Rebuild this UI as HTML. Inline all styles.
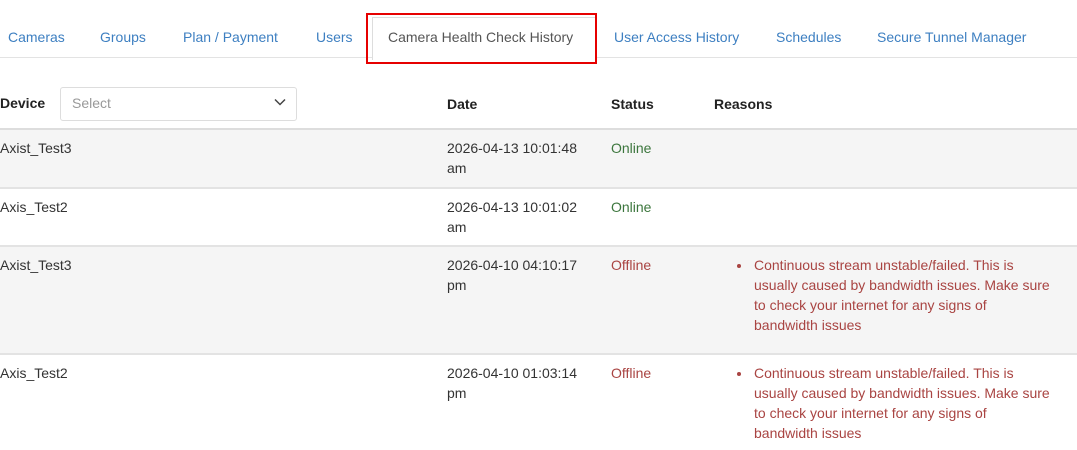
<!DOCTYPE html>
<html><head><style>
body{margin:0;width:1077px;height:450px;background:#fff;font-family:"Liberation Sans",sans-serif;font-size:14px;color:#333;position:relative;overflow:hidden}
.a{position:absolute;white-space:nowrap;line-height:20px}
.tab{color:#3d7fc1;top:27px}
.b{font-weight:bold;color:#222}
.row{position:absolute;left:0;width:1077px}
.on{color:#3c763d}.off{color:#a94442}
.rs{color:#a94442;position:absolute;left:754px;line-height:20px;width:300px;white-space:normal}
.dot{position:absolute;left:737px;width:4px;height:4px;border-radius:50%;background:#a94442}
</style></head><body>
<div style="position:absolute;left:0;top:57px;width:1077px;height:1px;background:#e3e3e3"></div>
<div style="position:absolute;left:372px;top:17px;width:222px;height:42px;background:#fff;border:1px solid #ddd;border-bottom:none"></div>
<div style="position:absolute;left:366px;top:13px;width:227px;height:47px;border:2.5px solid #e60000"></div>
<span class="a tab" style="left:8px">Cameras</span>
<span class="a tab" style="left:100px">Groups</span>
<span class="a tab" style="left:183px">Plan / Payment</span>
<span class="a tab" style="left:316px">Users</span>
<span class="a" style="left:388px;top:27px;color:#555">Camera Health Check History</span>
<span class="a tab" style="left:614px">User Access History</span>
<span class="a tab" style="left:776px">Schedules</span>
<span class="a tab" style="left:877px">Secure Tunnel Manager</span>

<span class="a b" style="left:0;top:93px">Device</span>
<div style="position:absolute;left:60px;top:87px;width:235px;height:32px;border:1px solid #ddd;border-radius:3px"></div>
<span class="a" style="left:72px;top:93px;color:#999">Select</span>
<svg style="position:absolute;left:274px;top:98px" width="12" height="8"><path d="M1 1.5L6 6.5L11 1.5" fill="none" stroke="#444" stroke-width="1.5"/></svg>
<span class="a b" style="left:447px;top:94px">Date</span>
<span class="a b" style="left:611px;top:94px">Status</span>
<span class="a b" style="left:714px;top:94px">Reasons</span>

<div class="row" style="top:128px;height:2px;background:#ddd"></div>
<div class="row" style="top:130px;height:57px;background:#f5f5f5"></div>
<div class="row" style="top:187px;height:2px;background:#e3e3e3"></div>
<div class="row" style="top:245px;height:2px;background:#e3e3e3"></div>
<div class="row" style="top:247px;height:106px;background:#f5f5f5"></div>
<div class="row" style="top:353px;height:2px;background:#e3e3e3"></div>

<span class="a" style="left:0;top:138px">Axist_Test3</span>
<span class="a" style="left:447px;top:138px">2026-04-13 10:01:48<br>am</span>
<span class="a on" style="left:611px;top:138px">Online</span>

<span class="a" style="left:0;top:197px">Axis_Test2</span>
<span class="a" style="left:447px;top:197px">2026-04-13 10:01:02<br>am</span>
<span class="a on" style="left:611px;top:197px">Online</span>

<span class="a" style="left:0;top:255px">Axist_Test3</span>
<span class="a" style="left:447px;top:255px">2026-04-10 04:10:17<br>pm</span>
<span class="a off" style="left:611px;top:255px">Offline</span>
<div class="dot" style="top:264px"></div>
<div class="rs" style="top:255px">Continuous stream unstable/failed. This is usually caused by bandwidth issues. Make sure to check your internet for any signs of bandwidth issues</div>

<span class="a" style="left:0;top:363px">Axis_Test2</span>
<span class="a" style="left:447px;top:363px">2026-04-10 01:03:14<br>pm</span>
<span class="a off" style="left:611px;top:363px">Offline</span>
<div class="dot" style="top:372px"></div>
<div class="rs" style="top:363px">Continuous stream unstable/failed. This is usually caused by bandwidth issues. Make sure to check your internet for any signs of bandwidth issues</div>
</body></html>
